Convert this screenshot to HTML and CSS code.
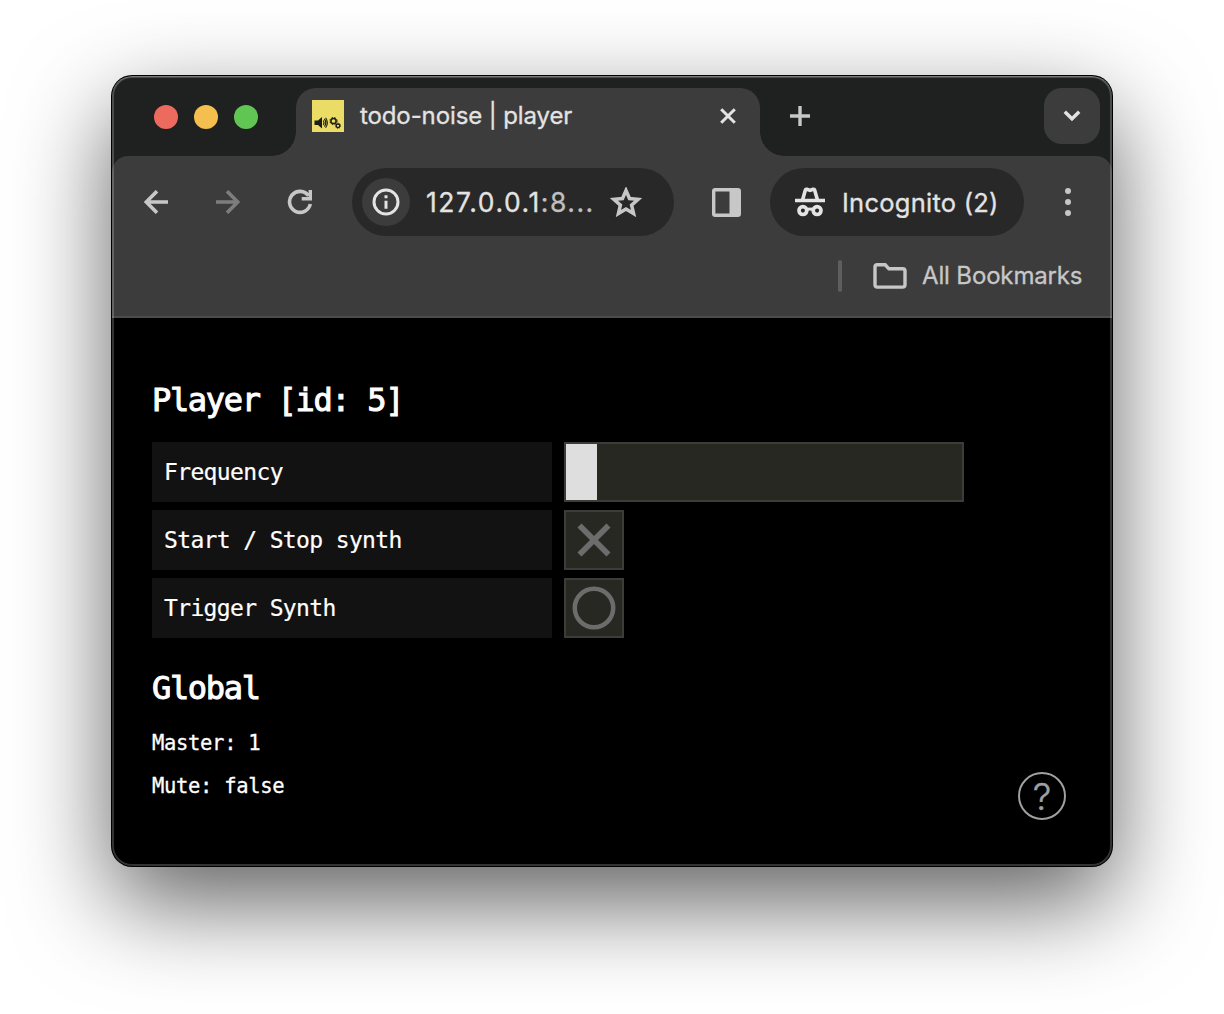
FILE: index.html
```html
<!DOCTYPE html>
<html lang="en">
<head>
<meta charset="utf-8">
<title>todo-noise | player</title>
<link rel="stylesheet" href="styles.css">
</head>
<body>
<div class="window">
  <header class="tabstrip">
    <div class="lights"><span class="light red"></span><span class="light amber"></span><span class="light green"></span></div>
    <div class="tab">
      <svg class="favicon" viewBox="0 0 32 32"><path fill="#ebdc66" d="M0 0h32v32H0z"/><g fill="#1d1d18"><path d="M2.500 20.500h3.500l4-3.500v11.500l-4-3.500H2.500z"/></g><g fill="none" stroke="#1d1d18"><path stroke-width="1.100" d="M11.300 20.500q1.500 2.300 0 4.500M12.300 18.900q3 4 0 7.600M13.600 17.700q3.500 5 0 10"/><circle cx="21.500" cy="21" r="2.600" stroke-width="1.500"/><circle cx="21.500" cy="21" r="3.600" stroke-width="1" stroke-dasharray="1.500 1.400"/><circle cx="26" cy="25.800" r="1.800" stroke-width="1.300"/><circle cx="26" cy="25.800" r="2.600" stroke-width=".8" stroke-dasharray="1.100 .94"/></g></svg>
      <span class="tab-title">todo-noise | player</span>
      <svg class="close" viewBox="0 0 16 16"><path d="M1.200 1.200l13.600 13.600M14.800 1.200L1.200 14.800" stroke="#e3e3e3" stroke-width="3"/></svg>
    </div>
    <svg class="plus" viewBox="0 0 20 20"><path d="M10 0v20M0 10h20" stroke="#c7c7c7" stroke-width="3.400"/></svg>
    <div class="tab-search"><svg width="18" height="12" viewBox="0 0 18 12"><path d="M1.800 1.800L9 8.800l7.200-7" fill="none" stroke="#e3e3e3" stroke-width="3.400"/></svg></div>
  </header>
  <div class="toolbar">
    <div class="nav">
      <svg class="back" viewBox="0 0 24 24"><path d="M24 12H2.500M13 1.200L2.200 12 13 22.800" fill="none" stroke="#c7c7c7" stroke-width="3.600"/></svg>
      <svg class="forward" viewBox="0 0 24 24"><path d="M0 12h21.500M11 1.200L21.800 12 11 22.800" fill="none" stroke="#7d7d7d" stroke-width="3.600"/></svg>
      <svg class="reload" viewBox="0 0 26 26"><path d="M23.300 15A10.500 10.500 0 1 1 21.600 6.800" fill="none" stroke="#c7c7c7" stroke-width="3.600"/><path d="M21.600 1H25v10.500H14.700V8.100h6.900z" fill="#c7c7c7"/></svg>
      <div class="omnibox">
        <span class="site-info"><svg width="28" height="28" viewBox="0 0 28 28"><circle cx="14" cy="14" r="12" fill="none" stroke="#e3e3e3" stroke-width="3"/><path d="M14 12.800v8M14 7.200v3" stroke="#e3e3e3" stroke-width="3"/></svg></span>
        <span class="url">127.0.0.1<span class="port">:8...</span></span>
        <svg class="star" viewBox="0 0 32 30"><path d="M16 3.500l3.500 8 8.700.8-6.600 5.800 2 8.500L16 22.100l-7.600 4.500 2-8.500-6.600-5.800 8.700-.8z" fill="none" stroke="#c7c7c7" stroke-width="3.500"/></svg>
      </div>
      <svg class="panel" viewBox="0 0 29 29"><rect x="1.700" y="1.700" width="25.600" height="25.600" rx="1.500" fill="none" stroke="#c7c7c7" stroke-width="3.400"/><path d="M17.500 1h10v27h-10z" fill="#c7c7c7"/></svg>
      <div class="incognito">
        <svg width="30" height="30" viewBox="0 0 30 30"><g fill="none" stroke="#e3e3e3"><path d="M0 13.500h30" stroke-width="3.600"/><path d="M7.400 13.500l2.900-10.300q.4-1.300 1.600-.9l3.100 1.100 3.100-1.100q1.200-.4 1.600.9L22.600 13.500" stroke-width="3.600"/><circle cx="7.900" cy="23.600" r="3.900" stroke-width="3.700"/><circle cx="22.100" cy="23.600" r="3.900" stroke-width="3.700"/><path d="M11 22.600q4-1.200 8 0" stroke-width="3"/></g></svg>
        <span class="incognito-label">Incognito (2)</span>
      </div>
      <svg class="menu" viewBox="0 0 6 28"><g fill="#c7c7c7"><circle cx="3" cy="3" r="3"/><circle cx="3" cy="14" r="3"/><circle cx="3" cy="25" r="3"/></g></svg>
    </div>
    <div class="bookmarks">
      <span class="divider"></span>
      <svg class="folder" viewBox="0 0 34 26"><path d="M2 4q0-2.200 2.300-2.200h7.900l3.700 4h13.700q2.400 0 2.400 2.300v13.700q0 2.300-2.400 2.300H4.300q-2.300 0-2.300-2.300z" fill="none" stroke="#c7c7c7" stroke-width="3.400"/></svg>
      <span class="bookmarks-label">All Bookmarks</span>
    </div>
  </div>
  <main class="page">
    <h1>Player [id: 5]</h1>
    <div class="controls">
      <div class="label">Frequency</div><div class="slider"><div class="fill" style="width: 30.5px"></div></div>
      <div class="label">Start / Stop synth</div><div class="button"><svg viewBox="0 0 56 56"><path d="M13.500 13.500l29 29M42.500 13.500l-29 29" stroke="#6c6c6c" stroke-width="5.700"/></svg></div>
      <div class="label">Trigger Synth</div><div class="button"><svg viewBox="0 0 56 56"><circle cx="28" cy="28" r="19.200" fill="none" stroke="#6c6c6c" stroke-width="4.500"/></svg></div>
    </div>
    <h1 class="global">Global</h1>
    <p>Master: 1</p>
    <p>Mute: false</p>
    <div class="help">?</div>
  </main>
</div>
</body>
</html>
```
FILE: styles.css
```css
* { box-sizing: border-box; }
body {
  margin: 0;
  height: 1014px;
  padding: 76px 112px 148px;
  background: #fff;
  overflow: hidden;
  font-family: Inter, "Liberation Sans", sans-serif;
}
svg { display: block; flex: none; }
.window {
  position: relative;
  width: 1000px;
  height: 790px;
  border-radius: 20px;
  overflow: hidden;
  background: #1f2120;
  box-shadow: 0 0 0 1px #000, 0 36px 96px rgba(0, 0, 0, .63);
}
/* light rim that runs inside the window edge */
.window::after {
  content: "";
  position: absolute;
  inset: 0;
  border-radius: 20px;
  box-shadow: inset 0 0 0 2px rgba(255, 255, 255, .2), inset 0 1px 0 rgba(255, 255, 255, .25);
  pointer-events: none;
}
.tabstrip { display: flex; height: 80px; padding: 12px 12px 0 42px; }
.lights { display: flex; gap: 16px; padding-top: 17px; width: 142px; }
.light { width: 24px; height: 24px; border-radius: 50%; }
.red { background: #ed6a5e; }
.amber { background: #f5bf4f; }
.green { background: #61c554; }
.tab {
  position: relative;
  display: flex;
  width: 464px;
  height: 68px;
  padding: 12px 24px 0 16px;
  border-radius: 20px 20px 0 0;
  background: #3c3c3c;
}
.tab::before, .tab::after {
  content: "";
  position: absolute;
  bottom: 0;
  width: 24px;
  height: 24px;
}
.tab::before { right: 100%; background: radial-gradient(circle at 0 0, transparent 23.5px, #3c3c3c 24px); }
.tab::after { left: 100%; background: radial-gradient(circle at 100% 0, transparent 23.5px, #3c3c3c 24px); }
.favicon { width: 32px; height: 32px; }
.tab-title {
  margin-left: 16px;
  font-size: 24px;
  line-height: 32px;
  letter-spacing: -.110px;
  color: #e3e3e3;
  white-space: nowrap;
  -webkit-text-stroke: .3px #e3e3e3;
}
.close { width: 16px; height: 16px; margin: 8px 0 0 auto; }
.plus { width: 20px; height: 20px; margin: 18px 0 0 30px; }
.tab-search {
  display: flex;
  align-items: center;
  justify-content: center;
  width: 56px;
  height: 56px;
  margin-left: auto;
  border-radius: 18px;
  background: #3c3c3c;
}
.toolbar {
  height: 162px;
  padding-top: 12px;
  border-radius: 16px 16px 0 0;
  border-bottom: 2px solid #4c4c4c;
  background: #3c3c3c;
}
.nav { display: flex; align-items: center; height: 68px; padding-left: 32px; }
.back, .forward { width: 24px; height: 24px; }
.forward { margin-left: 48px; }
.reload { width: 26px; height: 26px; margin-left: 47px; }
.omnibox {
  display: flex;
  align-items: center;
  width: 322px;
  height: 68px;
  margin-left: 39px;
  padding: 0 32px 0 10px;
  border-radius: 34px;
  background: #282828;
}
.site-info {
  display: flex;
  align-items: center;
  justify-content: center;
  width: 48px;
  height: 48px;
  border-radius: 50%;
  background: #3c3c3c;
}
.url {
  margin-left: 16px;
  font-size: 26.500px;
  letter-spacing: 1.550px;
  color: #e3e3e3;
  white-space: nowrap;
  -webkit-text-stroke: .3px;
}
.port { color: #c0c0c0; }
.star { width: 32px; height: 30px; margin-left: auto; }
.panel { width: 29px; height: 29px; margin-left: 37.500px; }
.incognito {
  display: flex;
  align-items: center;
  width: 254px;
  height: 68px;
  margin-left: 29.500px;
  padding-left: 25px;
  border-radius: 34px;
  background: #282828;
}
.incognito-label {
  margin-left: 17px;
  padding-top: 1px;
  font-size: 25.500px;
  letter-spacing: .250px;
  color: #e3e3e3;
  white-space: nowrap;
  -webkit-text-stroke: .3px #e3e3e3;
}
.menu { width: 6px; height: 28px; margin-left: 41px; }
.bookmarks { display: flex; align-items: center; height: 80px; padding-left: 726px; }
.divider { width: 4px; height: 32px; border-radius: 2px; background: #5e5e5e; }
.folder { width: 34px; height: 26px; margin-left: 31px; }
.bookmarks-label {
  margin-left: 15px;
  padding-bottom: 2px;
  font-size: 24px;
  letter-spacing: -.150px;
  color: #c7c7c7;
  white-space: nowrap;
  -webkit-text-stroke: .3px #c7c7c7;
}
.page {
  position: relative;
  height: 548px;
  padding: 62px 40px 0;
  background: #000;
  color: #fff;
  font-family: "DejaVu Sans Mono", monospace;
}
h1 {
  margin: 0 0 22px;
  font-size: 32px;
  font-weight: 400;
  line-height: 41px;
  margin-bottom: 21px;
  letter-spacing: -1.330px;
  -webkit-text-stroke: 1px #fff;
}
.controls { display: grid; grid-template-columns: 400px 400px; gap: 8px 12px; }
.label {
  height: 60px;
  padding-left: 12px;
  background: #121212;
  font-size: 23px;
  line-height: 60px;
  letter-spacing: -.640px;
  -webkit-text-stroke: .2px #fff;
}
.slider, .button { height: 60px; border: 2px solid #3c3c38; background: #272822; }
.button { width: 60px; }
.fill { height: 100%; background: #dedede; }
.global { margin: 30px 0 19px; }
p {
  margin: 0 0 13px;
  font-size: 20.500px;
  line-height: 30px;
  letter-spacing: -.320px;
  -webkit-text-stroke: .3px #fff;
}
.help {
  position: absolute;
  right: 46px;
  bottom: 46px;
  width: 48px;
  height: 48px;
  border: 2.500px solid #a0a0a0;
  border-radius: 50%;
  color: #a0a0a0;
  font: 300 37px/46px Inter, sans-serif;
  text-align: center;
  -webkit-text-stroke: .4px #a0a0a0;
}
```
